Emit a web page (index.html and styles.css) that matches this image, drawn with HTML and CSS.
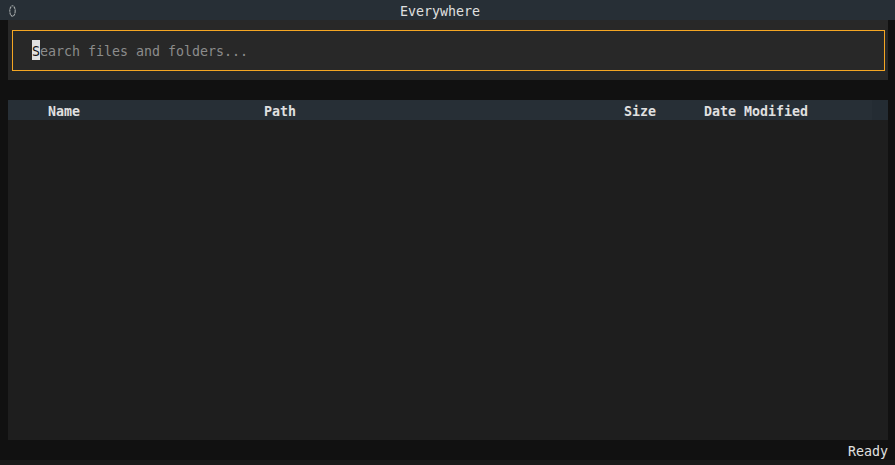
FILE: index.html
```html
<!DOCTYPE html>
<html lang="en">
<head>
<meta charset="utf-8">
<title>Everywhere</title>
<link rel="stylesheet" href="styles.css">
</head>
<body>
<header class="titlebar">
<svg class="icon" viewBox="0 0 9 14" width="9" height="14"><ellipse cx="4.5" cy="6" rx="2.7" ry="5.2"/></svg>
<span>Everywhere</span>
</header>
<section class="search"><div class="field"><span class="cursor">S</span>earch files and folders...</div></section>
<main class="results">
<div class="columns"><span>Name</span><span>Path</span><span>Size</span><span>Date Modified</span><i class="gutter"></i></div>
</main>
<footer class="status">Ready</footer>
<div class="edge"></div>
</body>
</html>
```
FILE: styles.css
```css
* { box-sizing: border-box; }
body {
  margin: 0;
  height: 465px;
  display: flex;
  flex-direction: column;
  overflow: hidden;
  background: #111;
  color: #e0e0e0;
  font: 13.29px/20px "DejaVu Sans Mono", "Liberation Mono", monospace;
}
.titlebar {
  display: grid;
  grid-template-columns: 392px auto;
  align-items: center;
  height: 20px;
  padding-left: 8px;
  padding-top: 2px;
  background: #272f36;
}
.icon { fill: none; stroke: #a5aaab; stroke-width: 1.1; stroke-dasharray: 2.4 .5; }
.search {
  height: 60px;
  margin: 0 7px 20px 8px;
  padding: 10px 3px 9px 4px;
  background: #282828;
}
.field {
  height: 41px;
  padding: 9px 19px;
  border: 1px solid #f5a623;
  line-height: 23px;
  color: #8c8c8c;
}
.cursor {
  display: inline-block;
  width: 8px;
  height: 20px;
  vertical-align: top;
  background: #e0e0e0;
  color: #111;
}
.results { height: 340px; margin: 0 7px 0 8px; background: #1e1e1e; }
.columns {
  display: grid;
  grid-template-columns: 216px 360px 80px 168px 16px;
  height: 20px;
  padding-left: 40px;
  background: #272f36;
  font-weight: bold;
  line-height: 23px;
}
.gutter { height: 20px; background: #242c33; }
.status { height: 20px; padding-right: 7px; text-align: right; line-height: 23px; }
.edge { height: 5px; background: #191919; }
```
